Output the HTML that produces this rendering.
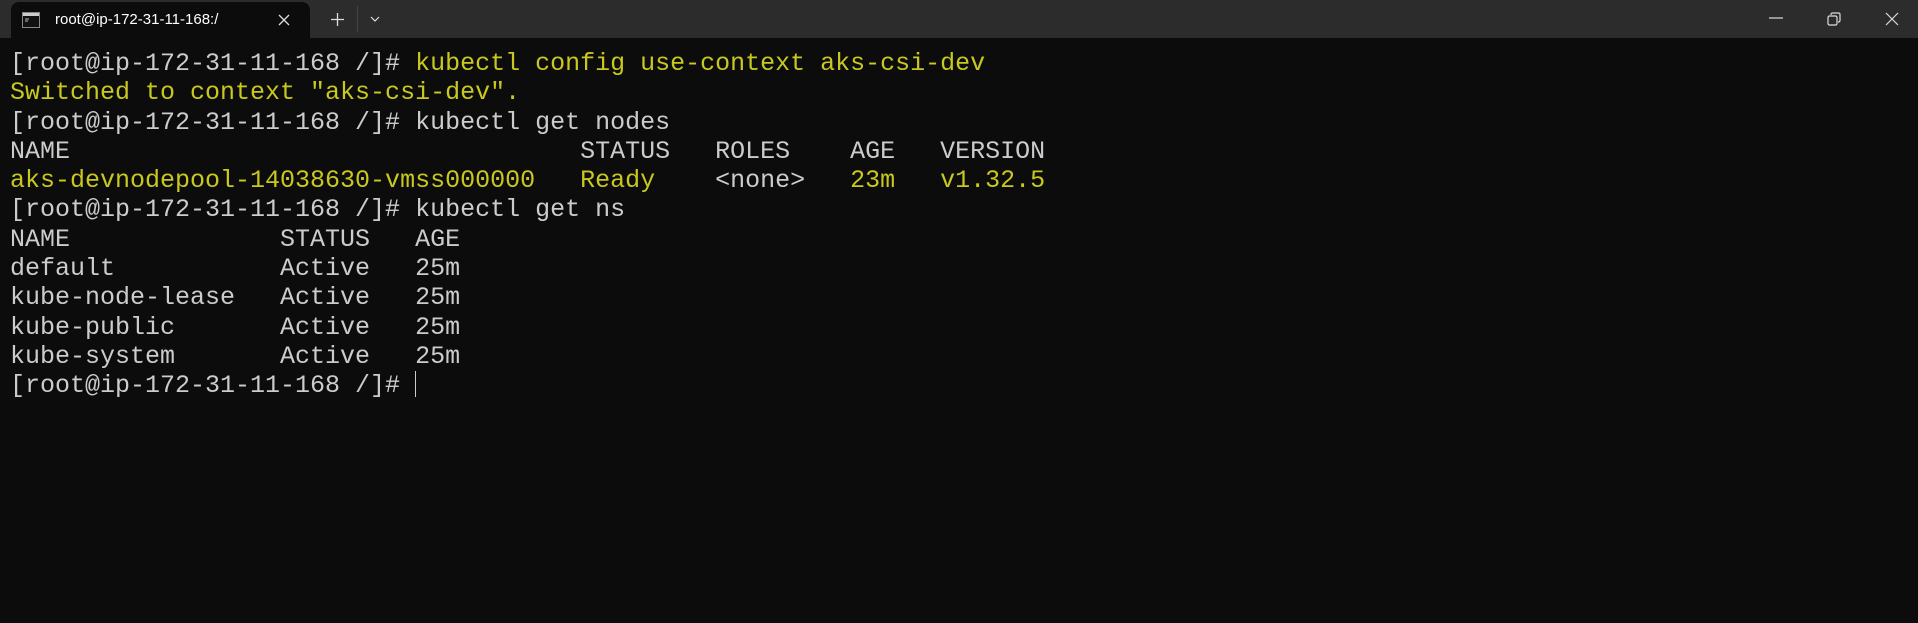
<!DOCTYPE html>
<html><head><meta charset="utf-8"><style>
html,body{margin:0;padding:0;width:1918px;height:623px;overflow:hidden;background:#0c0c0c;}
.bar{position:absolute;left:0;top:0;width:1918px;height:38px;background:#2c2c2c;}
.tab{position:absolute;left:11px;top:2px;width:299px;height:36px;background:#0c0c0c;border-radius:8px 8px 0 0;}
.tab .t{position:absolute;left:44px;top:9px;font:15px "Liberation Sans",sans-serif;color:#fff;}
.term{position:absolute;left:10px;top:49px;font:25px/29.3px "Liberation Mono",monospace;color:#cccccc;white-space:pre;letter-spacing:0;}
.y{color:#c8c81e;}
.cur{display:inline-block;width:1px;height:26px;background:#ccc;vertical-align:-5px;}
</style></head><body>
<div class="bar">
 <div class="tab">
  <svg style="position:absolute;left:11px;top:10px" width="18" height="16"><rect x="0.5" y="0.5" width="17" height="15" fill="#111" stroke="#888"/><rect x="1" y="1" width="16" height="3" fill="#ccc"/><path d="M3 7h4M3 9h3" stroke="#bbb" stroke-width="1"/></svg>
  <div class="t">root@ip-172-31-11-168:/</div>
  <svg style="position:absolute;left:267px;top:12px" width="12" height="12"><path d="M1 1L11 11M11 1L1 11" stroke="#ddd" stroke-width="1.3"/></svg>
 </div>
 <svg style="position:absolute;left:331px;top:13px" width="13" height="13"><path d="M6.5 0V13M0 6.5H13" stroke="#ddd" stroke-width="1.3"/></svg>
 <div style="position:absolute;left:357px;top:6px;width:1px;height:26px;background:#444"></div>
 <svg style="position:absolute;left:370px;top:16px" width="10" height="6"><path d="M1 1L5 5L9 1" stroke="#ddd" stroke-width="1.2" fill="none"/></svg>
 <svg style="position:absolute;left:1769px;top:17px" width="14" height="2"><path d="M0 1H14" stroke="#ddd" stroke-width="1.2"/></svg>
 <svg style="position:absolute;left:1827px;top:12px" width="14" height="14" fill="none" stroke="#ddd" stroke-width="1.2"><rect x="1" y="4" width="9" height="9" rx="1.5"/><path d="M4 3V2.5a1.5 1.5 0 0 1 1.5-1.5H11.5a1.5 1.5 0 0 1 1.5 1.5V8.5a1.5 1.5 0 0 1-1.5 1.5H11"/></svg>
 <svg style="position:absolute;left:1885px;top:12px" width="14" height="14"><path d="M1 1L13 13M13 1L1 13" stroke="#ddd" stroke-width="1.2"/></svg>
</div>
<div class="term">[root@ip-172-31-11-168 /]# <span class="y">kubectl config use-context aks-csi-dev</span>
<span class="y">Switched to context "aks-csi-dev".</span>
[root@ip-172-31-11-168 /]# kubectl get nodes
NAME                                  STATUS   ROLES    AGE   VERSION
<span class="y">aks-devnodepool-14038630-vmss000000   Ready    </span>&lt;none&gt;<span class="y">   23m   v1.32.5</span>
[root@ip-172-31-11-168 /]# kubectl get ns
NAME              STATUS   AGE
default           Active   25m
kube-node-lease   Active   25m
kube-public       Active   25m
kube-system       Active   25m
[root@ip-172-31-11-168 /]# <span class="cur"></span></div>
</body></html>
